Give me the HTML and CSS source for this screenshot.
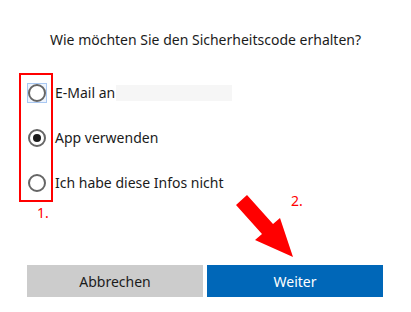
FILE: index.html
```html
<!DOCTYPE html>
<html lang="de">
<head>
<meta charset="utf-8">
<link rel="stylesheet" href="styles.css">
</head>
<body>
<div class="dialog">
  <h1 class="title">Wie möchten Sie den Sicherheitscode erhalten?</h1>
  <div class="options">
    <label class="option">
      <span class="radio focus"><span class="circle"></span></span>
      <span class="label">E-Mail an</span>
      <span class="redacted"></span>
    </label>
    <label class="option">
      <span class="radio"><span class="circle checked"></span></span>
      <span class="label">App verwenden</span>
    </label>
    <label class="option">
      <span class="radio"><span class="circle"></span></span>
      <span class="label">Ich habe diese Infos nicht</span>
    </label>
  </div>
  <div class="buttons">
    <button class="btn btn-cancel">Abbrechen</button>
    <button class="btn btn-next">Weiter</button>
  </div>
  <div class="mark-box"></div>
  <div class="mark-num num1">1.</div>
  <div class="mark-num num2">2.</div>
  <svg class="arrow" width="411" height="312" viewBox="0 0 411 312">
    <polygon points="236,205 247,195 273,224 280,218 293,257 255,240 262,234" fill="#ff0000"/>
  </svg>
</div>
</body>
</html>
```
FILE: styles.css
```css
html, body {
  margin: 0;
  padding: 0;
  background: #ffffff;
}
.dialog {
  position: relative;
  width: 411px;
  height: 312px;
  font-family: "Segoe UI", "Noto Sans", "Open Sans", sans-serif;
  color: #1b1b1b;
  overflow: hidden;
}
.title {
  margin: 0;
  padding-top: 30px;
  font-size: 14px;
  font-weight: normal;
  line-height: 20px;
  text-align: center;
}
.options {
  display: flex;
  flex-direction: column;
  padding-left: 27px;
  margin-top: 20px;
}
.option {
  display: flex;
  align-items: center;
  height: 45px;
  gap: 8px;
}
.radio {
  width: 20px;
  height: 20px;
  box-sizing: border-box;
  display: flex;
  align-items: center;
  justify-content: center;
  border: 1px solid transparent;
}
.radio.focus {
  border: 1px solid #a9c8f2;
  background: #eef4fd;
}
.circle {
  width: 18px;
  height: 18px;
  box-sizing: border-box;
  border: 2px solid #666666;
  border-radius: 50%;
  background: #ffffff;
  display: flex;
  align-items: center;
  justify-content: center;
}
.circle.checked::after {
  content: "";
  width: 8px;
  height: 8px;
  border-radius: 50%;
  background: #1b1b1b;
}
.label {
  font-size: 14px;
  line-height: 20px;
}
.redacted {
  width: 116px;
  height: 16px;
  background: #f6f6f6;
  margin-left: -7px;
}
.buttons {
  display: flex;
  gap: 4px;
  padding: 0 28px 0 27px;
  margin-top: 60px;
}
.btn {
  flex: 1;
  height: 32px;
  border: none;
  font-family: inherit;
  font-size: 14px;
  padding: 0;
}
.btn-cancel {
  background: #cccccc;
  color: #1b1b1b;
}
.btn-next {
  background: #0067b8;
  color: #ffffff;
}
.mark-box {
  position: absolute;
  left: 19px;
  top: 73px;
  width: 34px;
  height: 129px;
  box-sizing: border-box;
  border: 2px solid #ff0000;
}
.mark-num {
  position: absolute;
  color: #ff0000;
  font-size: 14px;
  line-height: 16px;
}
.num1 {
  left: 37px;
  top: 205px;
}
.num2 {
  left: 291px;
  top: 193px;
}
.arrow {
  position: absolute;
  left: 0;
  top: 0;
}
```
